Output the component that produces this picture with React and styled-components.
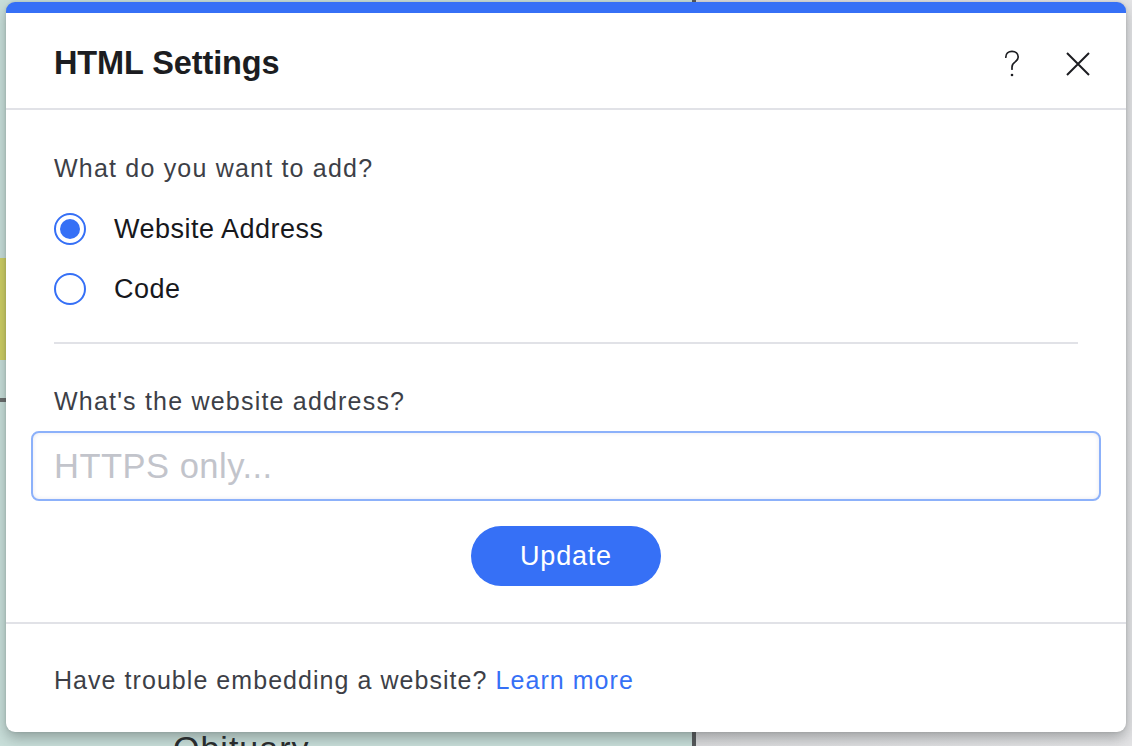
import { useState } from "react";
import styled, { createGlobalStyle } from "styled-components";

const GlobalStyle = createGlobalStyle`
  html, body {
    margin: 0;
    padding: 0;
    overflow: hidden;
  }
  body {
    font-family: "Liberation Sans", Arial, Helvetica, sans-serif;
    -webkit-font-smoothing: antialiased;
  }
`;

const BLUE = "#3670f6";

const Page = styled.div`
  position: relative;
  height: 746px;
  width: 1132px;
  overflow: hidden;
  background:
    linear-gradient(90deg, transparent 692px, #56585a 692px, #56585a 696px, transparent 696px),
    linear-gradient(180deg, transparent 258px, #cfcf62 258px, #cfcf62 360px, transparent 360px,
      transparent 398px, #6a6c6c 398px, #6a6c6c 402px, transparent 402px) 0 0 / 692px 100% no-repeat,
    linear-gradient(90deg, #c9dfda 0, #c9dfda 692px, #dcdcde 696px, #e4e4e6 100%);
  display: flex;
  flex-direction: column;
  padding: 728px 0 0 173px;
  box-sizing: border-box;
`;

const PageHeading = styled.div`
  font-size: 34px;
  color: #2a2c2e;
  letter-spacing: 1px;
  line-height: 40px;
`;

const Overlay = styled.div`
  position: absolute;
  inset: 0;
  padding: 2px 6px 0 6px;
  box-sizing: border-box;
`;

const Modal = styled.div`
  width: 1120px;
  background: #fff;
  border-radius: 9px;
  overflow: hidden;
  box-shadow: 0 6px 14px rgba(40, 50, 50, 0.35), 0 0 3px rgba(0, 0, 0, 0.12);
  border-top: 11px solid ${BLUE};
  display: flex;
  flex-direction: column;
`;

const Header = styled.div`
  height: 97px;
  box-sizing: border-box;
  display: flex;
  align-items: center;
  justify-content: space-between;
  padding: 6px 35px 0 48px;
  border-bottom: 2px solid #e1e2e7;
`;

const Title = styled.h1`
  margin: 0;
  font-size: 32.5px;
  font-weight: 700;
  color: #1c1d21;
  letter-spacing: -0.1px;
`;

const HeaderActions = styled.div`
  display: flex;
  align-items: center;
  gap: 40px;
`;

const IconButton = styled.button`
  border: 0;
  background: none;
  padding: 0;
  width: 26px;
  height: 30px;
  display: flex;
  align-items: center;
  justify-content: center;
  color: #1c1d21;
  cursor: pointer;
`;

const Body = styled.div`
  padding: 43px 48px 36px;
  display: flex;
  flex-direction: column;
`;

const Question = styled.div`
  font-size: 25px;
  line-height: 30px;
  color: #3d3f47;
  letter-spacing: 1.2px;
  margin-top: ${(p) => p.$top || 0}px;
`;

const RadioGroup = styled.div`
  display: flex;
  flex-direction: column;
  margin-top: 16px;
`;

const RadioRow = styled.label`
  height: 60px;
  display: flex;
  align-items: center;
  gap: 28px;
  cursor: pointer;
`;

const RadioCircle = styled.span`
  width: 32px;
  height: 32px;
  box-sizing: border-box;
  border-radius: 50%;
  border: 2px solid ${BLUE};
  display: flex;
  align-items: center;
  justify-content: center;
  &::after {
    content: "";
    width: 20px;
    height: 20px;
    border-radius: 50%;
    background: ${(p) => (p.$checked ? BLUE : "transparent")};
  }
`;

const RadioLabel = styled.span`
  font-size: 27px;
  color: #17181c;
  letter-spacing: 0.5px;
`;

const Divider = styled.hr`
  margin: 23px 0 0;
  border: 0;
  border-top: 2px solid #e1e2e7;
`;

const Input = styled.input`
  margin: 15px -23px 0;
  height: 70px;
  box-sizing: border-box;
  border: 2px solid #8cb1fa;
  border-radius: 8px;
  padding: 0 21px;
  font-family: inherit;
  font-size: 34.5px;
  letter-spacing: 0.5px;
  color: #17181c;
  outline: none;
  box-shadow: inset 0 0 4px rgba(40, 60, 120, 0.12);
  &::placeholder {
    color: #c2c4cb;
  }
`;

const ButtonRow = styled.div`
  display: flex;
  justify-content: center;
  margin-top: 25px;
`;

const PrimaryButton = styled.button`
  width: 190px;
  height: 60px;
  border: 0;
  border-radius: 30px;
  background: ${BLUE};
  color: #fff;
  font-family: inherit;
  font-size: 27px;
  letter-spacing: 0.8px;
  cursor: pointer;
`;

const Footer = styled.div`
  border-top: 2px solid #e1e2e7;
  padding: 41px 48px 37px;
  font-size: 25px;
  line-height: 30px;
  color: #3d3f47;
  letter-spacing: 1.05px;
`;

const Link = styled.a`
  color: ${BLUE};
  text-decoration: none;
`;

function QuestionIcon() {
  return (
    <svg width="16" height="28" viewBox="0 0 16 28" fill="none">
      <path
        d="M1.8 7.2C1.8 3.6 4.4 1.4 8 1.4C11.6 1.4 14.2 3.7 14.2 7C14.2 9.6 12.6 10.9 10.9 12.1C9.1 13.3 8 14.6 8 17.2V19.2"
        stroke="currentColor"
        strokeWidth="1.7"
        strokeLinecap="round"
      />
      <circle cx="8" cy="25" r="1.3" fill="currentColor" />
    </svg>
  );
}

function CloseIcon() {
  return (
    <svg width="26" height="26" viewBox="0 0 26 26" fill="none">
      <path d="M2 2L24 24M24 2L2 24" stroke="currentColor" strokeWidth="2" />
    </svg>
  );
}

export default function App() {
  const [kind, setKind] = useState("url");
  const options = [
    { id: "url", label: "Website Address" },
    { id: "code", label: "Code" },
  ];
  return (
    <>
      <GlobalStyle />
      <Page>
        <PageHeading>Obituary</PageHeading>
        <Overlay>
          <Modal>
            <Header>
              <Title>HTML Settings</Title>
              <HeaderActions>
                <IconButton aria-label="Help">
                  <QuestionIcon />
                </IconButton>
                <IconButton aria-label="Close">
                  <CloseIcon />
                </IconButton>
              </HeaderActions>
            </Header>
            <Body>
              <Question>What do you want to add?</Question>
              <RadioGroup>
                {options.map((o) => (
                  <RadioRow key={o.id} onClick={() => setKind(o.id)}>
                    <RadioCircle $checked={kind === o.id} />
                    <RadioLabel>{o.label}</RadioLabel>
                  </RadioRow>
                ))}
              </RadioGroup>
              <Divider />
              <Question $top={42}>What's the website address?</Question>
              <Input placeholder="HTTPS only..." />
              <ButtonRow>
                <PrimaryButton>Update</PrimaryButton>
              </ButtonRow>
            </Body>
            <Footer>
              Have trouble embedding a website? <Link href="#">Learn more</Link>
            </Footer>
          </Modal>
        </Overlay>
      </Page>
    </>
  );
}
